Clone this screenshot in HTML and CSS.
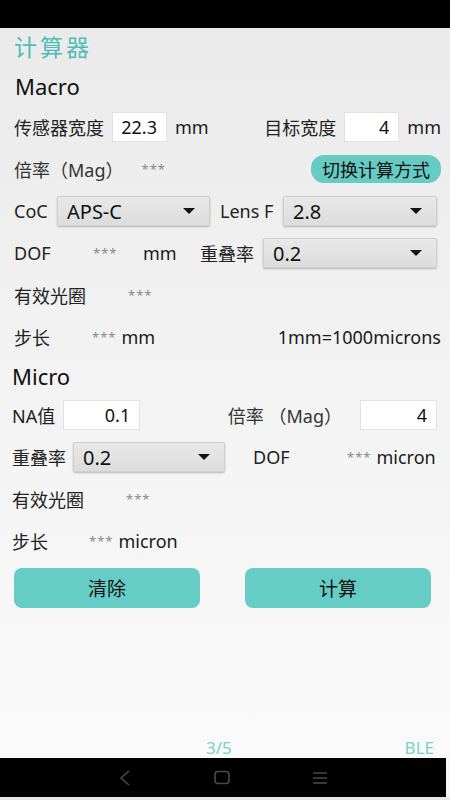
FILE: index.html
```html
<!DOCTYPE html>
<html lang="zh">
<head>
  <meta charset="UTF-8">
  <meta name="viewport" content="width=device-width, initial-scale=1.0">
  <title>计算器</title>
  <link rel="stylesheet" href="styles.css">
</head>
<body>
  <div class="statusbar"></div>
  <main class="calc">
    <h1 class="title">计算器</h1>

    <h2 class="section">Macro</h2>
    <div class="row split">
      <div class="group">
        <span class="lbl">传感器宽度</span>
        <input class="num w55" value="22.3">
        <span class="unit">mm</span>
      </div>
      <div class="group">
        <span class="lbl">目标宽度</span>
        <input class="num w55" value="4">
        <span class="unit">mm</span>
      </div>
    </div>
    <div class="row">
      <span class="lbl soft">倍率（Mag）</span>
      <span class="stars gap18">***</span>
      <button class="switch">切换计算方式</button>
    </div>
    <div class="row">
      <span class="lbl w43">CoC</span>
      <div class="select w153"><span>APS-C</span><i class="caret"></i></div>
      <span class="lbl w63 gap10">Lens F</span>
      <div class="select w154"><span>2.8</span><i class="caret"></i></div>
    </div>
    <div class="row">
      <span class="lbl w79">DOF</span>
      <span class="stars w50">***</span>
      <span class="unit w57">mm</span>
      <span class="lbl w63">重叠率</span>
      <div class="select w174"><span>0.2</span><i class="caret"></i></div>
    </div>
    <div class="row">
      <span class="lbl w114">有效光圈</span>
      <span class="stars">***</span>
    </div>
    <div class="row">
      <span class="lbl w78">步长</span>
      <span class="stars">***</span>
      <span class="unit gap5">mm</span>
      <span class="unit push">1mm=1000microns</span>
    </div>

    <h2 class="section micro">Micro</h2>
    <div class="row split tight">
      <div class="group">
        <span class="lbl">NA值</span>
        <input class="num w77" value="0.1">
      </div>
      <div class="group">
        <span class="lbl soft">倍率 （Mag）</span>
        <input class="num w77 gap10" value="4">
      </div>
    </div>
    <div class="row tight">
      <span class="lbl w61">重叠率</span>
      <div class="select w152"><span>0.2</span><i class="caret"></i></div>
      <span class="lbl w94 gap28">DOF</span>
      <span class="stars">***</span>
      <span class="unit gap5">micron</span>
    </div>
    <div class="row tight">
      <span class="lbl w114">有效光圈</span>
      <span class="stars">***</span>
    </div>
    <div class="row tight">
      <span class="lbl w77">步长</span>
      <span class="stars">***</span>
      <span class="unit gap5">micron</span>
    </div>

    <div class="actions">
      <button class="action">清除</button>
      <button class="action">计算</button>
    </div>

    <div class="pager">
      <span class="page">3/5</span>
      <span class="ble">BLE</span>
    </div>
  </main>
  <nav class="navbar">
    <svg width="14" height="16" viewBox="0 0 14 16"><path d="M11 1 L3 8 L11 15" fill="none" stroke="#4a4a4a" stroke-width="1.6"/></svg>
    <svg width="16" height="16" viewBox="0 0 16 16"><rect x="1" y="1.5" width="14" height="12" rx="3" fill="none" stroke="#4a4a4a" stroke-width="1.6"/></svg>
    <svg width="16" height="16" viewBox="0 0 16 16"><path d="M1 3h14M1 8h14M1 13h14" stroke="#4a4a4a" stroke-width="1.4"/></svg>
  </nav>
  <div class="bottomstrip"></div>
</body>
</html>
```

FILE: styles.css
```css
  body {
    font-family: "Noto Sans", "Noto Sans CJK SC", sans-serif;
    margin: 0;
    padding: 0;
    width: 450px;
    height: 800px;
    display: flex;
    flex-direction: column;
    background: #f6f6f6;
    color: #1a1a1a;
    overflow: hidden;
  }
  .statusbar {
    height: 28px;
    background-color: #000;
    flex-shrink: 0;
  }
  .calc {
    flex-grow: 1;
    display: flex;
    flex-direction: column;
    background: linear-gradient(#eaeaea, #f3f3f3 50%, #fafafa);
  }
  .title {
    margin: 0;
    height: 38px;
    line-height: 38px;
    padding-left: 14px;
    font-size: 23px;
    font-weight: normal;
    letter-spacing: 3px;
    color: #4fbdb6;
  }
  .section {
    margin: 0;
    height: 40px;
    line-height: 40px;
    padding-left: 15px;
    font-size: 22px;
    font-weight: normal;
    color: #111;
  }
  .section.micro {
    height: 36px;
    line-height: 36px;
    padding-left: 12px;
  }
  .row {
    height: 42px;
    display: flex;
    align-items: center;
    padding: 0 9px 0 14px;
    font-size: 18px;
  }
  .row.tight {
    padding: 0 13px 0 12px;
  }
  .row.split {
    justify-content: space-between;
  }
  .group {
    display: flex;
    align-items: center;
    gap: 8px;
  }
  .lbl {
    color: #222;
    white-space: nowrap;
  }
  .lbl.soft {
    color: #333;
  }
  .unit {
    color: #1a1a1a;
    white-space: nowrap;
  }
  .stars {
    color: #8a8a8a;
    font-size: 13px;
    letter-spacing: 1px;
    align-self: flex-start;
    margin-top: 12px;
  }
  .push {
    margin-left: auto;
  }
  .num {
    box-sizing: border-box;
    height: 30px;
    border: 1px solid #e2e2e2;
    background: #fff;
    text-align: right;
    padding: 0 9px 0 0;
    font-family: inherit;
    font-size: 18px;
    color: #111;
    outline: none;
  }
  .switch {
    margin-left: auto;
    height: 28px;
    padding: 0 11px;
    border: none;
    border-radius: 13px;
    background-color: #66cbc4;
    font-family: inherit;
    font-size: 18px;
    color: #111;
  }
  .select {
    box-sizing: border-box;
    flex-shrink: 0;
    height: 30px;
    display: flex;
    align-items: center;
    justify-content: space-between;
    padding: 0 14px 0 9px;
    background: linear-gradient(#e8e8e8, #dcdcdc);
    border: 1px solid #cfcfcf;
    border-radius: 2px;
    box-shadow: 0 1px 2px rgba(0, 0, 0, 0.25);
    font-size: 20px;
    color: #111;
  }
  .caret {
    width: 0;
    height: 0;
    border-left: 6px solid transparent;
    border-right: 6px solid transparent;
    border-top: 6px solid #111;
  }
  .w43 { width: 43px; }
  .w50 { width: 50px; }
  .w55 { width: 55px; }
  .w57 { width: 57px; }
  .w61 { width: 61px; }
  .w63 { width: 63px; }
  .w77 { width: 77px; }
  .w78 { width: 78px; }
  .w79 { width: 79px; }
  .w94 { width: 94px; }
  .w114 { width: 114px; }
  .w152 { width: 152px; }
  .w153 { width: 153px; }
  .w154 { width: 154px; }
  .w174 { width: 174px; }
  .gap5 { margin-left: 5px; }
  .gap10 { margin-left: 10px; }
  .gap18 { margin-left: 18px; }
  .gap28 { margin-left: 28px; }
  .actions {
    display: flex;
    justify-content: space-between;
    padding: 6px 19px 0 14px;
  }
  .action {
    width: 186px;
    height: 40px;
    border: none;
    border-radius: 8px;
    background-color: #66cdc6;
    font-family: inherit;
    font-size: 19px;
    color: #111;
  }
  .pager {
    margin-top: auto;
    height: 22px;
    display: flex;
    align-items: flex-start;
    position: relative;
    padding-right: 16px;
    justify-content: flex-end;
    font-size: 17px;
    color: #7ccfc9;
  }
  .page {
    position: absolute;
    left: 206px;
  }
  .navbar {
    height: 39px;
    background-color: #000;
    margin-right: 4px;
    display: flex;
    align-items: center;
    justify-content: center;
    gap: 82px;
    flex-shrink: 0;
  }
  .bottomstrip {
    height: 3px;
    background: #e8e8e8;
    flex-shrink: 0;
  }
```
